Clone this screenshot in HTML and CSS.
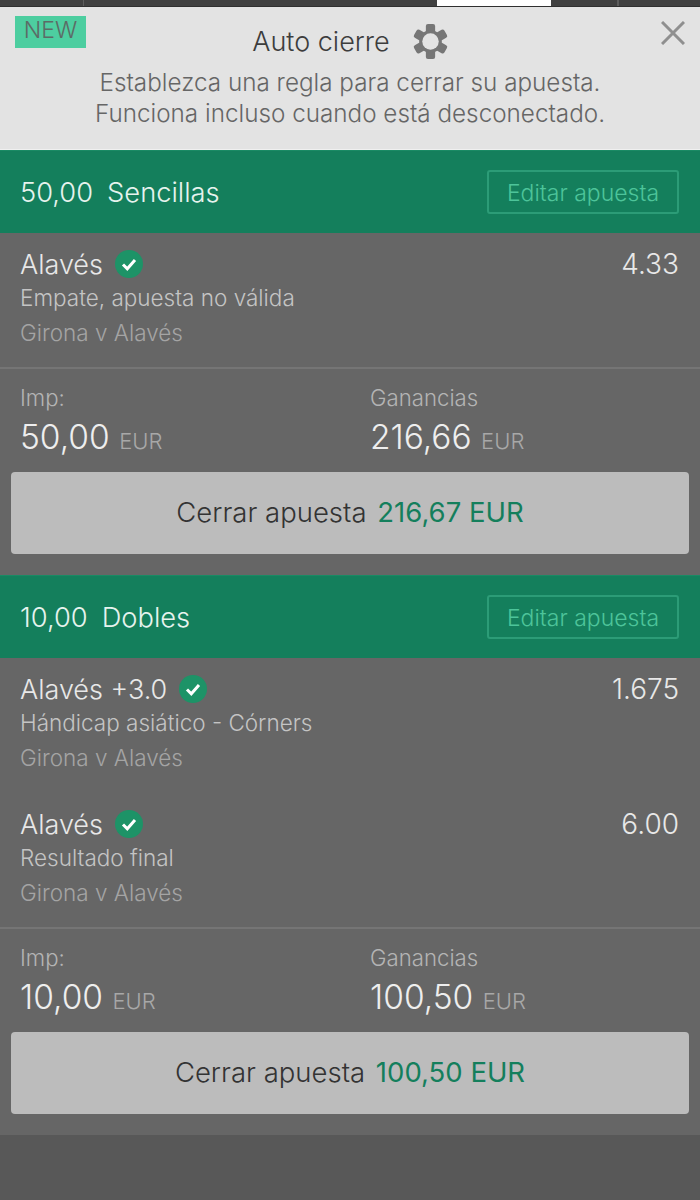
FILE: index.html
```html
<!DOCTYPE html>
<html>
<head>
    <title>Auto cierre</title>
    <link rel="stylesheet" href="styles.css">
</head>
<body>
    <div class="top-bar">
        <div class="tab tab-first"></div>
        <div class="tab tab-wide"></div>
        <div class="tab tab-active"></div>
        <div class="tab tab-small"></div>
        <div class="tab tab-last"></div>
    </div>

    <!-- Auto cierre notice -->
    <div class="notice">
        <span class="badge">NEW</span>
        <svg class="close" viewBox="0 0 24 24" width="24" height="24">
            <path d="M1 1L23 23M23 1L1 23" fill="none" stroke="#8f8f8f" stroke-width="3"/>
        </svg>
        <div class="notice-title">
            <span>Auto cierre</span>
            <svg class="gear" viewBox="0 0 34 34" width="35" height="35">
                <g fill="#767676">
                    <rect x="12.5" y="0" width="9" height="34" rx="2"/>
                    <rect x="12.5" y="0" width="9" height="34" rx="2" transform="rotate(60 17 17)"/>
                    <rect x="12.5" y="0" width="9" height="34" rx="2" transform="rotate(120 17 17)"/>
                </g>
                <circle cx="17" cy="17" r="11" fill="#767676"/>
                <circle cx="17" cy="17" r="8" fill="#e3e3e3"/>
            </svg>
        </div>
        <p>Establezca una regla para cerrar su apuesta.</p>
        <p>Funciona incluso cuando está desconectado.</p>
    </div>

    <!-- Sencillas -->
    <div class="bet-head">
        <div class="bet-name"><span>50,00</span><span>Sencillas</span></div>
        <a class="edit-btn">Editar apuesta</a>
    </div>
    <div class="bet-body">
        <div class="selections">
            <div class="selection">
                <div class="sel-row">
                    <div class="sel-name">Alavés
                        <svg class="check" viewBox="0 0 28 28" width="28" height="28">
                            <circle cx="14" cy="14" r="14" fill="#1d9367"/>
                            <path d="M8 14.5L12.3 18.8L20 10" fill="none" stroke="#fff" stroke-width="3"/>
                        </svg>
                    </div>
                    <div class="odds">4.33</div>
                </div>
                <div class="market">Empate, apuesta no válida</div>
                <div class="event">Girona v Alavés</div>
            </div>
        </div>
        <div class="totals">
            <div class="total-col">
                <div class="total-label">Imp:</div>
                <div class="total-value">50,00 <small>EUR</small></div>
            </div>
            <div class="total-col">
                <div class="total-label">Ganancias</div>
                <div class="total-value">216,66 <small>EUR</small></div>
            </div>
        </div>
        <div class="cashout">Cerrar apuesta <span>216,67 EUR</span></div>
    </div>

    <!-- Dobles -->
    <div class="bet-head">
        <div class="bet-name"><span>10,00</span><span>Dobles</span></div>
        <a class="edit-btn">Editar apuesta</a>
    </div>
    <div class="bet-body">
        <div class="selections">
            <div class="selection">
                <div class="sel-row">
                    <div class="sel-name">Alavés +3.0
                        <svg class="check" viewBox="0 0 28 28" width="28" height="28">
                            <circle cx="14" cy="14" r="14" fill="#1d9367"/>
                            <path d="M8 14.5L12.3 18.8L20 10" fill="none" stroke="#fff" stroke-width="3"/>
                        </svg>
                    </div>
                    <div class="odds">1.675</div>
                </div>
                <div class="market">Hándicap asiático - Córners</div>
                <div class="event">Girona v Alavés</div>
            </div>
            <div class="selection">
                <div class="sel-row">
                    <div class="sel-name">Alavés
                        <svg class="check" viewBox="0 0 28 28" width="28" height="28">
                            <circle cx="14" cy="14" r="14" fill="#1d9367"/>
                            <path d="M8 14.5L12.3 18.8L20 10" fill="none" stroke="#fff" stroke-width="3"/>
                        </svg>
                    </div>
                    <div class="odds">6.00</div>
                </div>
                <div class="market">Resultado final</div>
                <div class="event">Girona v Alavés</div>
            </div>
        </div>
        <div class="totals">
            <div class="total-col">
                <div class="total-label">Imp:</div>
                <div class="total-value">10,00 <small>EUR</small></div>
            </div>
            <div class="total-col">
                <div class="total-label">Ganancias</div>
                <div class="total-value">100,50 <small>EUR</small></div>
            </div>
        </div>
        <div class="cashout">Cerrar apuesta <span>100,50 EUR</span></div>
    </div>
    <div class="page-foot"></div>
</body>
</html>
```

FILE: styles.css
```css
body {
    font-family: Inter, "Liberation Sans", sans-serif;
    background-color: #585858;
    margin: 0;
    padding: 0;
}
.top-bar {
    display: flex;
    height: 6px;
    background-color: #404040;
    border-bottom: 1px solid #2f2f2f;
}
.tab {
    border-right: 1px solid #5c5c5c;
}
.tab-first {
    width: 83px;
}
.tab-wide {
    width: 353px;
    border-right: none;
}
.tab-active {
    width: 114px;
    background-color: #fff;
    border-right: none;
}
.tab-small {
    width: 66px;
}
.notice {
    position: relative;
    height: 143px;
    background-color: #e3e3e3;
    border-bottom: 1px solid #f0f0f0;
    box-sizing: border-box;
    padding-top: 14px;
    text-align: center;
    color: #666;
    font-size: 24.25px;
    font-weight: 300;
}
.notice p {
    margin: 0;
    height: 31px;
    line-height: 31px;
}
.badge {
    position: absolute;
    left: 15px;
    top: 9px;
    width: 71px;
    height: 32px;
    line-height: 28px;
    background-color: #4dcea0;
    color: #5c6b66;
    font-size: 23px;
    font-weight: 300;
}
.close {
    position: absolute;
    left: 661px;
    top: 14px;
}
.notice-title {
    display: flex;
    justify-content: center;
    align-items: center;
    gap: 23px;
    height: 40px;
    margin-bottom: 6px;
    color: #3d3d3d;
    font-size: 27px;
}
.bet-head {
    display: flex;
    justify-content: space-between;
    align-items: center;
    height: 83px;
    padding: 0 21px 0 20px;
    background-color: #147f5c;
    border-top: 1px solid #1a8a64;
    box-sizing: border-box;
}
.bet-name {
    display: flex;
    gap: 14px;
    color: #e6f3ee;
    font-size: 27.3px;
    font-weight: 300;
}
.edit-btn {
    width: 192px;
    height: 44px;
    line-height: 42px;
    box-sizing: border-box;
    border: 2px solid #2c9c77;
    border-radius: 3px;
    text-align: center;
    color: #4dc49a;
    font-size: 23px;
    font-weight: 300;
}
.bet-body {
    background-color: #666;
    padding-bottom: 21px;
}
.selections {
    padding: 12px 21px 14px 20px;
    border-bottom: 2px solid #757575;
}
.selection + .selection {
    margin-top: 27px;
}
.sel-row {
    display: flex;
    justify-content: space-between;
    height: 38px;
    align-items: center;
    color: #e8e8e8;
    font-size: 27px;
    font-weight: 300;
}
.sel-name {
    display: flex;
    align-items: center;
    gap: 12px;
}
.odds {
    font-size: 28px;
}
.market {
    height: 30px;
    line-height: 30px;
    color: #c4c4c4;
    font-size: 22.5px;
    font-weight: 300;
}
.event {
    height: 40px;
    line-height: 40px;
    color: #a4a4a4;
    font-size: 22.5px;
    font-weight: 300;
}
.totals {
    display: flex;
    padding: 13px 0 0 20px;
    height: 103px;
    box-sizing: border-box;
}
.total-col {
    width: 350px;
    flex: none;
}
.total-label {
    height: 33px;
    line-height: 32px;
    color: #b4b4b4;
    font-size: 22.2px;
    font-weight: 300;
}
.total-value {
    color: #eee;
    font-size: 33.5px;
    font-weight: 300;
    line-height: 44px;
}
.total-value small {
    color: #a8a8a8;
    font-size: 22px;
}
.cashout {
    margin: 0 11px;
    height: 82px;
    line-height: 81px;
    background-color: #bcbcbc;
    border-radius: 4px;
    text-align: center;
    color: #333;
    font-size: 27.5px;
    font-weight: 300;
}
.cashout span {
    margin-left: 3px;
    color: #147f5c;
    font-weight: 400;
}
.page-foot {
    height: 65px;
}
```
